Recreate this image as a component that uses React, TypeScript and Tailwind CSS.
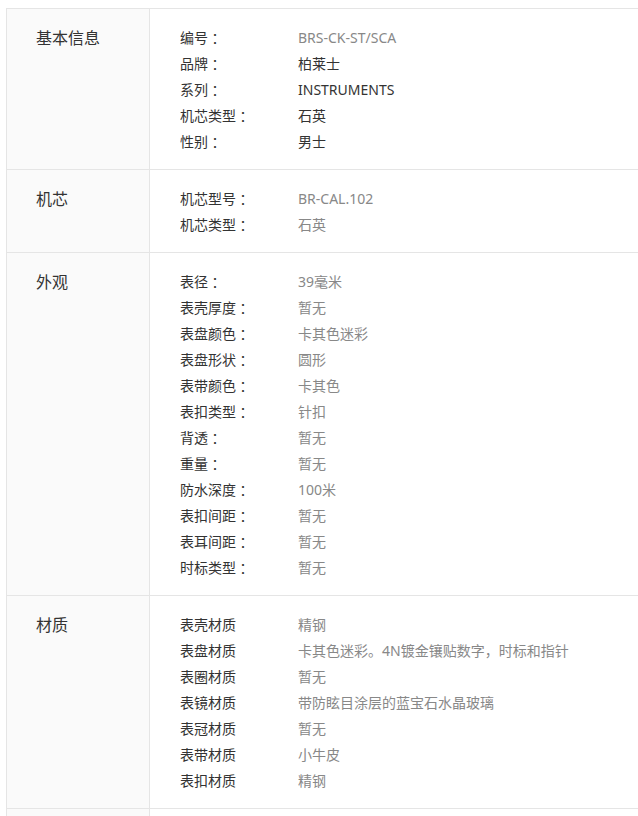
import React from "react";

type Item = { label: string; value: string; dark?: boolean };
type Section = { title: string; items: Item[] };

const sections: Section[] = [
  {
    title: "基本信息",
    items: [
      { label: "编号：", value: "BRS-CK-ST/SCA" },
      { label: "品牌：", value: "柏莱士", dark: true },
      { label: "系列：", value: "INSTRUMENTS", dark: true },
      { label: "机芯类型：", value: "石英", dark: true },
      { label: "性别：", value: "男士", dark: true },
    ],
  },
  {
    title: "机芯",
    items: [
      { label: "机芯型号：", value: "BR-CAL.102" },
      { label: "机芯类型：", value: "石英" },
    ],
  },
  {
    title: "外观",
    items: [
      { label: "表径：", value: "39毫米" },
      { label: "表壳厚度：", value: "暂无" },
      { label: "表盘颜色：", value: "卡其色迷彩" },
      { label: "表盘形状：", value: "圆形" },
      { label: "表带颜色：", value: "卡其色" },
      { label: "表扣类型：", value: "针扣" },
      { label: "背透：", value: "暂无" },
      { label: "重量：", value: "暂无" },
      { label: "防水深度：", value: "100米" },
      { label: "表扣间距：", value: "暂无" },
      { label: "表耳间距：", value: "暂无" },
      { label: "时标类型：", value: "暂无" },
    ],
  },
  {
    title: "材质",
    items: [
      { label: "表壳材质", value: "精钢" },
      { label: "表盘材质", value: "卡其色迷彩。4N镀金镶贴数字，时标和指针" },
      { label: "表圈材质", value: "暂无" },
      { label: "表镜材质", value: "带防眩目涂层的蓝宝石水晶玻璃" },
      { label: "表冠材质", value: "暂无" },
      { label: "表带材质", value: "小牛皮" },
      { label: "表扣材质", value: "精钢" },
    ],
  },
];

function Label({ text }: { text: string }) {
  if (text.endsWith("：")) {
    return (
      <>
        {text.slice(0, -1)}
        <span
          className="inline-block w-[14px] h-[26px] align-top text-center leading-[26px]"
          style={{ fontFamily: '"Noto Sans CJK JP", sans-serif' }}
        >
          ：
        </span>
      </>
    );
  }
  return <>{text}</>;
}

export default function App() {
  return (
    <div
      className="w-[638px] h-[816px] overflow-hidden bg-white pl-[6px] pt-[8px]"
      style={{ fontFamily: '"Noto Sans", "Noto Sans CJK SC", sans-serif' }}
    >
      <div className="border-l border-t border-[#e5e5e5]">
        {sections.map((s) => (
          <div key={s.title} className="flex border-b border-[#e5e5e5]">
            <div className="w-[143px] shrink-0 bg-[#fafafa] border-r border-[#e5e5e5] pl-[29px] pt-[16px] text-[16px] leading-[26px] text-[#333]">
              {s.title}
            </div>
            <div className="flex-1 pl-[30px] pt-[16px] pb-[14px]">
              {s.items.map((it) => (
                <div key={it.label} className="flex h-[26px] overflow-hidden text-[14px] leading-[26px]">
                  <div className="w-[118px] shrink-0 text-[#333]">
                    <Label text={it.label} />
                  </div>
                  <div className={it.dark ? "text-[#333]" : "text-[#888]"}>{it.value}</div>
                </div>
              ))}
            </div>
          </div>
        ))}
        <div className="flex h-[40px]">
          <div className="w-[143px] shrink-0 bg-[#fafafa] border-r border-[#e5e5e5]" />
          <div className="flex-1" />
        </div>
      </div>
    </div>
  );
}
